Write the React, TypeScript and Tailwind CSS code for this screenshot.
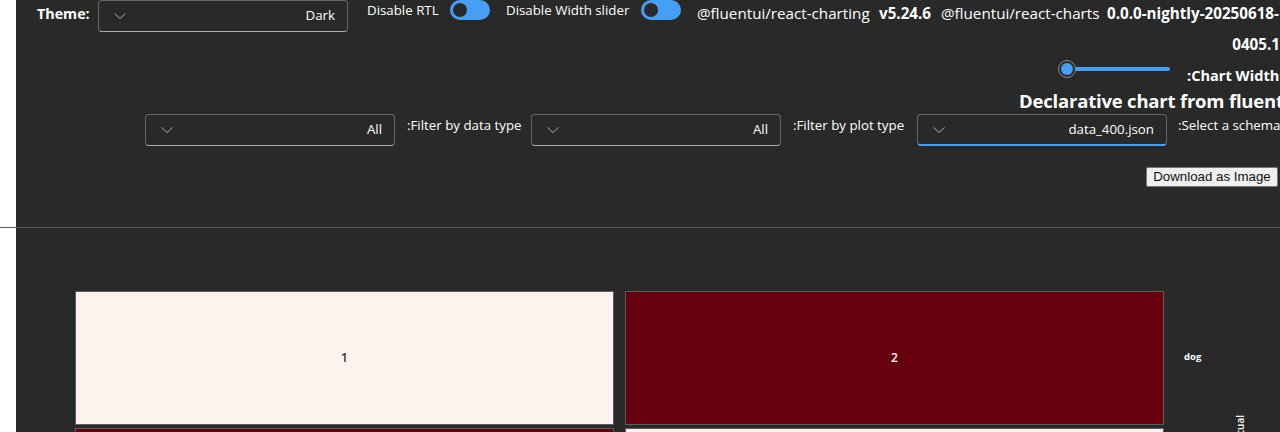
import React from "react";

const font = "font-['Open_Sans',sans-serif]";

function Chevron() {
  return (
    <svg width="14" height="12" viewBox="0 0 14 12" fill="none">
      <path d="M1.5 3.5 L7 8.5 L12.5 3.5" stroke="#adadad" strokeWidth="1" />
    </svg>
  );
}

function Dropdown({ value, focused }: { value: string; focused?: boolean }) {
  return (
    <div
      className={`flex items-center justify-between w-[250px] h-[32px] shrink-0 rounded-[4px] border border-[#666666] pl-[14px] pr-[12px] bg-[#292929] ${
        focused ? "border-b-2 border-b-[#479ef5]" : "border-b-[#adadad]"
      }`}
    >
      <Chevron />
      <span className="text-[13.3px] text-white">{value}</span>
    </div>
  );
}

function Toggle() {
  return (
    <div className="flex items-center w-[40px] h-[20px] shrink-0 rounded-full bg-[#479ef5] px-[3px]">
      <div className="w-[14px] h-[14px] rounded-full bg-[#292929]" />
    </div>
  );
}

function Strip() {
  return <div className="w-4 shrink-0 bg-white" />;
}

export default function App() {
  return (
    <div className={`w-[1280px] h-[432px] overflow-hidden flex flex-col ${font} text-white`}>
      {/* header */}
      <div className="flex h-[227px] shrink-0">
        <Strip />
        <div className="flex-1 bg-[#292929] overflow-hidden flex flex-col">
          {/* row 1 */}
          <div className="flex items-start pl-[21px] whitespace-nowrap">
            <span className="w-[61px] shrink-0 font-bold text-[14.3px] leading-[28px]">Theme:</span>
            <Dropdown value="Dark" />
            <span className="ml-[19px] w-[83px] shrink-0 text-[13.3px] leading-[20px]">Disable RTL</span>
            <Toggle />
            <span className="ml-[16px] w-[135px] shrink-0 text-[13.3px] leading-[20px]">Disable Width slider</span>
            <Toggle />
            <div className="ml-[16px] flex-1 flex flex-col text-[15.2px]">
              <div className="flex leading-[26px]">
                <span className="w-[182px] shrink-0">@fluentui/react-charting</span>
                <span className="w-[62px] shrink-0 font-bold">v5.24.6</span>
                <span className="w-[166px] shrink-0">@fluentui/react-charts</span>
                <span className="font-bold">0.0.0-nightly-20250618-</span>
              </div>
              <div className="mt-[5px] leading-[26px] text-right font-bold">0405.1</div>
            </div>
          </div>

          {/* slider row */}
          <div className="flex items-start pl-[1042px] mt-[2px] whitespace-nowrap">
            <div className="relative flex items-center w-[112px] h-[20px] shrink-0">
              <div className="absolute left-[8px] right-0 h-[4px] rounded-full bg-[#479ef5]" />
              <div className="relative w-[18px] h-[18px] rounded-full border border-[#8a8a8a] bg-[#292929] flex items-center justify-center">
                <div className="w-[12px] h-[12px] rounded-full bg-[#479ef5]" />
              </div>
            </div>
            <span className="ml-[17px] mt-[6px] text-[14.6px] leading-[20px] font-bold">:Chart Width</span>
          </div>

          {/* heading */}
          <div className="pl-[1003px] mt-[3px] whitespace-nowrap text-[18.5px] tracking-[-0.2px] leading-[26px] font-bold">
            Declarative chart from fluent
          </div>

          {/* filter row */}
          <div className="flex items-start pl-[129px] whitespace-nowrap">
            <Dropdown value="All" />
            <span className="w-[136px] shrink-0 pl-[12px] text-[13.3px] leading-[20px] pt-[1px]">:Filter by data type</span>
            <Dropdown value="All" />
            <span className="w-[136px] shrink-0 pl-[12px] text-[13.3px] leading-[20px] pt-[1px]">:Filter by plot type</span>
            <Dropdown value="data_400.json" focused />
            <span className="shrink-0 pl-[11px] text-[13.3px] leading-[20px] pt-[1px]">:Select a schema</span>
          </div>

          {/* download */}
          <div className="flex justify-end pr-[2px] mt-[21px]">
            <button className="w-[132px] h-[20px] rounded-[2px] border border-[#767676] bg-[#efefef] text-[#111] text-[13.3px] leading-[18px] font-['Liberation_Sans',sans-serif]">
              Download as Image
            </button>
          </div>
        </div>
      </div>

      <div className="h-px shrink-0 bg-[#5a5a5a]" />

      {/* chart */}
      <div className="flex flex-1">
        <Strip />
        <div className="flex-1 bg-[#292929] overflow-hidden pt-[63px] pl-[59px] flex items-start">
          <div className="grid grid-cols-[539px_539px] gap-x-[11px] gap-y-[3px] shrink-0">
            <div className="h-[134px] border border-[#5c5c5c] bg-[#fdf2ed] flex items-center justify-center text-[12px] font-semibold text-[#323130]">
              1
            </div>
            <div className="h-[134px] border border-[#5c5c5c] bg-[#67000d] flex items-center justify-center text-[12px] font-semibold text-white">
              2
            </div>
            <div className="h-[134px] border border-[#5c5c5c] bg-[#67000d]" />
            <div className="h-[134px] border border-[#5c5c5c] bg-[#fdf2ed]" />
          </div>
          <div className="ml-[20px] w-[50px] shrink-0 pt-[59px] text-[9.5px] leading-[14px] font-bold">dog</div>
          <div className="shrink-0 pt-[124px]">
            <div className="text-[10px] font-semibold [writing-mode:vertical-rl] rotate-180 leading-[12px]">Actual</div>
          </div>
        </div>
      </div>
    </div>
  );
}
